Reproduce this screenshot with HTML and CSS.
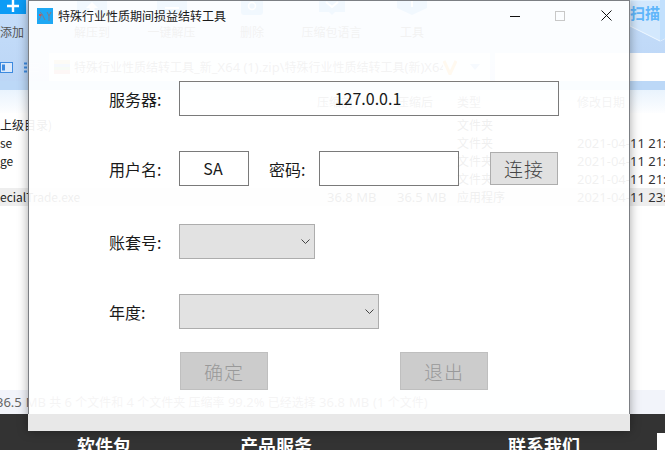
FILE: index.html
```html
<!DOCTYPE html>
<html lang="zh-CN">
<head>
<meta charset="utf-8">
<title>特殊行业性质期间损益结转工具</title>
<link rel="stylesheet" href="styles.css">
</head>
<body>
<div class="desktop">
  <div class="app">
    <div class="toolbar">
      <div class="tools">
        <div class="tool tool-add">
          <div class="add-btn">
            <svg width="12" height="12" viewBox="0 0 12 12"><path d="M6 0v12M0 6h12" stroke="#fff" stroke-width="2.4"/></svg>
          </div>
          <span>添加</span>
        </div>
        <div class="tool tool-a">
          <svg class="tool-icon" width="30" height="15" viewBox="0 0 30 15"><rect width="30" height="15" fill="#3d9bee"/><path d="M15 2l6 6h-3.500v7h-5V8H9z" fill="#fff"/></svg>
          <span>解压到</span>
        </div>
        <div class="tool tool-b">
          <svg class="tool-icon" width="30" height="15" viewBox="0 0 30 15"><path d="M0 0h30v11l-4 4H4l-4-4z" fill="#3d9bee"/><path d="M8 8h14" stroke="#fff" stroke-width="2"/></svg>
          <span>一键解压</span>
        </div>
        <div class="tool tool-c">
          <svg class="tool-icon" width="22" height="15" viewBox="0 0 22 15"><path d="M0 0h22v12q0 3-3 3H3q-3 0-3-3z" fill="#3d9bee"/><circle cx="11" cy="6" r="3.500" fill="none" stroke="#fff" stroke-width="1.500"/></svg>
          <span>删除</span>
        </div>
        <div class="tool tool-d">
          <svg class="tool-icon" width="26" height="15" viewBox="0 0 26 15"><path d="M0 0h26v12H16l-3 3-3-3H0z" fill="#3d9bee"/><path d="M7 2l6 5 6-5" fill="none" stroke="#fff" stroke-width="2"/></svg>
          <span>压缩包语言</span>
        </div>
        <div class="tool tool-e">
          <svg class="tool-icon" width="30" height="15" viewBox="0 0 30 15"><path d="M0 0h30v8l-15 7L0 8z" fill="#3d9bee"/><path d="M15 1v6" stroke="#fff" stroke-width="2"/></svg>
          <span>工具</span>
        </div>
        <div class="scan">
          <svg class="shield" width="60" height="42" viewBox="0 0 60 42"><path d="M0 0h60v26L30 41 0 26z" fill="#d3e8fd" stroke="#eef7ff"/><path d="M30 0h30v26L30 41z" fill="#c2e0fd"/></svg>
          <span class="scan-text">扫描</span>
        </div>
      </div>
      <div class="addressbar">
        <div class="view-icons">
          <svg width="13" height="11" viewBox="0 0 13 11"><rect x=".5" y=".5" width="12" height="10" fill="#dbe9fb" stroke="#3d8adf"/><rect x="2" y="2.500" width="3" height="6" fill="#3d8adf"/></svg>
          <svg width="15" height="11" viewBox="0 0 15 11"><path d="M0 1.500h3M0 5.500h3M0 9.500h3" stroke="#3d8adf" stroke-width="2"/><path d="M5 1.500h10M5 5.500h10M5 9.500h10" stroke="#d5e2f3"/></svg>
        </div>
        <div class="path">
          <svg class="zip" width="16" height="14" viewBox="0 0 16 14"><rect width="16" height="14" fill="#e3c97a"/><rect y="4" width="16" height="3" fill="#7aa7d8"/><rect y="7" width="16" height="3" fill="#8dbd7a"/><rect y="10" width="16" height="4" fill="#d98a7a"/></svg>
          <span class="path-text">特殊行业性质结转工具<span class="num">_</span>新<span class="num">_X64 (1).zip\</span>特殊行业性质结转工具<span class="num">(</span>新<span class="num">)X64</span></span>
          <svg class="vee" width="14" height="15" viewBox="0 0 14 15"><path d="M1 1l6 13 6-13" fill="none" stroke="#f5a623" stroke-width="3"/></svg>
          <svg class="caret" width="10" height="6" viewBox="0 0 10 6"><path d="M0 0h10L5 6z" fill="#7fb2e6"/></svg>
        </div>
        <div class="search"></div>
      </div>
    </div>
    <div class="band"></div>
    <div class="list-head">
      <span class="col-head-name"></span>
      <span class="col-head-size">压缩前</span>
      <span class="col-packed">压缩后</span>
      <span class="col-type">类型</span>
      <span class="col-date-head">修改日期</span>
    </div>
    <div class="list">
      <div class="item"><span class="col-name">上级目录)</span><span class="col-size"></span><span class="col-packed"></span><span class="col-type">文件夹</span><span class="col-date"></span></div>
      <div class="item"><span class="col-name">se</span><span class="col-size"></span><span class="col-packed"></span><span class="col-type">文件夹</span><span class="col-date">2021-04-11 21:40</span></div>
      <div class="item"><span class="col-name">ge</span><span class="col-size"></span><span class="col-packed"></span><span class="col-type">文件夹</span><span class="col-date">2021-04-11 21:40</span></div>
      <div class="item"><span class="col-name"></span><span class="col-size"></span><span class="col-packed"></span><span class="col-type">文件夹</span><span class="col-date">2021-04-11 21:40</span></div>
      <div class="item item-selected"><span class="col-name">ecialTrade.exe</span><span class="col-size num">36.8 MB</span><span class="col-packed num">36.5 MB</span><span class="col-type">应用程序</span><span class="col-date">2021-04-11 23:10</span></div>
    </div>
    <div class="status"><span class="num">36.5 MB</span> 共 <span class="num">6</span> 个文件和 <span class="num">4</span> 个文件夹 压缩率 <span class="num">99.2%</span> 已经选择 <span class="num">36.8 MB (1</span> 个文件<span class="num">)</span></div>
    <div class="footer">
      <span class="foot-a">软件包</span>
      <span class="foot-b">产品服务</span>
      <span class="foot-c">联系我们</span>
      <span class="foot-box"></span>
    </div>
  </div>

  <div class="dialog">
    <div class="titlebar">
      <svg class="app-icon" width="16" height="16" viewBox="0 0 16 16"><rect width="16" height="16" fill="#1ea8f4"/><path d="M2 12l3-6 3 6M5 6L3 4M10 4l2 4 2-4M12 8v5" fill="none" stroke="#7d7d8c"/><path d="M2 6h2v2H2z" fill="#d2504f"/></svg>
      <span class="app-title">特殊行业性质期间损益结转工具</span>
      <div class="win-controls">
        <svg class="win-min" width="10" height="10" viewBox="0 0 10 10"><path d="M0 5.500h10" stroke="#111"/></svg>
        <svg class="win-max" width="10" height="10" viewBox="0 0 10 10"><rect x=".5" y=".5" width="9" height="9" fill="none" stroke="#c8c8c8"/></svg>
        <svg class="win-close" width="11" height="11" viewBox="0 0 11 11"><path d="M.5.5l10 10M10.500.5l-10 10" stroke="#111"/></svg>
      </div>
    </div>
    <div class="form">
      <div class="row">
        <label class="label">服务器:</label>
        <input class="field field-server" type="text" value="127.0.0.1">
      </div>
      <div class="row row-user">
        <label class="label">用户名:</label>
        <input class="field field-user" type="text" value="SA">
        <label class="label label-pass">密码:</label>
        <input class="field field-pass" type="password">
        <button class="btn btn-connect" type="button">连接</button>
      </div>
      <div class="row row-book">
        <label class="label">账套号:</label>
        <div class="select select-book">
          <svg width="9" height="5" viewBox="0 0 9 5"><path d="M.5.5l4 4 4-4" fill="none" stroke="#444"/></svg>
        </div>
      </div>
      <div class="row row-year">
        <label class="label">年度:</label>
        <div class="select select-year">
          <svg width="9" height="5" viewBox="0 0 9 5"><path d="M.5.5l4 4 4-4" fill="none" stroke="#444"/></svg>
        </div>
      </div>
      <div class="row row-actions">
        <button class="btn btn-off" type="button" disabled>确定</button>
        <button class="btn btn-off btn-exit" type="button" disabled>退出</button>
      </div>
    </div>
    <div class="dialog-band"></div>
  </div>
</div>
</body>
</html>
```

FILE: styles.css
```css
* { box-sizing: border-box; }
html, body { margin: 0; padding: 0; }
body {
  width: 665px;
  height: 450px;
  overflow: hidden;
  font-family: "Noto Sans CJK SC", "Noto Sans", sans-serif;
  background: #fff;
}
.desktop { position: relative; width: 665px; height: 450px; overflow: hidden; }
.app { display: flex; flex-direction: column; height: 450px; color: #333; font-size: 12px; }
.num { font-family: "Noto Sans", "Noto Sans CJK SC", sans-serif; font-size: 13px; }

/* background application */
.toolbar { height: 81px; background: linear-gradient(#c6defa, #bcd6f6); flex: none; }
.tools { display: flex; height: 53px; overflow: hidden; }
.tool { display: flex; flex-direction: column; align-items: center; flex: none; }
.tool span { font-size: 12px; line-height: 18px; margin-top: 8px; color: #444; white-space: nowrap; }
.tool-add { width: 26px; margin-right: 48px; }
.tool-add span { margin-top: 9px; margin-left: -2px; color: #555; }
.add-btn { width: 26px; height: 14px; background: #0c9cf6; display: flex; justify-content: center; overflow: hidden; flex: none; }
.tool-icon { display: block; flex: none; }
.tool-a { width: 36px; margin-right: 37px; }
.tool-b { width: 49px; margin-right: 44px; }
.tool-c { width: 24px; margin-right: 38px; }
.tool-d { width: 59px; margin-right: 39px; }
.tool-e { width: 24px; }
.scan { margin-left: auto; width: 60px; height: 53px; position: relative; margin-right: -25px; flex: none; overflow: hidden; }
.shield { display: block; position: absolute; left: 0; top: 0; }
.scan-text { position: absolute; left: 0; top: 2px; font-size: 15px; line-height: 22px; font-weight: 700; color: #5fb6fb; white-space: nowrap; }

.addressbar { display: flex; height: 28px; align-items: stretch; }
.view-icons { width: 49px; display: flex; align-items: center; gap: 11px; flex: none; }
.path { width: 441px; display: flex; align-items: center; background: #eef5fd; padding-left: 5px; flex: none; overflow: hidden; }
.zip { flex: none; }
.path-text { width: 369px; flex: none; margin-left: 4px; font-size: 12px; white-space: nowrap; overflow: hidden; color: #555; }
.vee { flex: none; }
.caret { flex: none; margin-left: 13px; }
.search { flex: 1; margin-left: 5px; background: #fff; }

.band { height: 9px; background: #bcd8f7; flex: none; }
.list-head { height: 23px; display: flex; align-items: center; background: linear-gradient(#e9f3fd, #fdfeff); color: #555; flex: none; }
.col-head-name { width: 317px; flex: none; }
.col-head-size { width: 80px; flex: none; white-space: nowrap; }
.col-date-head { flex: none; white-space: nowrap; }
.list { flex: 1; padding-top: 3px; color: #222; }
.item { height: 18px; line-height: 18px; display: flex; overflow: hidden; }
.item-selected { background: #eeeeee; }
.col-name { width: 327px; flex: none; white-space: nowrap; }
.col-size { width: 70px; flex: none; white-space: nowrap; }
.col-packed { width: 60px; flex: none; white-space: nowrap; }
.col-type { width: 120px; flex: none; white-space: nowrap; }
.col-date { flex: none; white-space: nowrap; color: #333; font-family: "Noto Sans", sans-serif; font-size: 13px; }
.status { height: 24px; flex: none; background: #f2f4fa; line-height: 24px; white-space: nowrap; text-indent: -4px; word-spacing: 0.6px; color: #666; }
.footer { height: 36px; background: #333; display: flex; overflow: hidden; color: #fff; font-size: 18px; font-weight: 700; line-height: 24px; padding-top: 19px; padding-left: 77px; flex: none; }
.foot-a { width: 163px; flex: none; }
.foot-b { width: 268px; flex: none; }
.foot-c { width: 149px; flex: none; }
.foot-box { width: 20px; height: 22px; background: #fff; flex: none; }

/* dialog window over the application */
.dialog {
  position: absolute;
  left: 28px;
  top: 0;
  width: 602px;
  height: 431px;
  display: flex;
  flex-direction: column;
  background: rgba(255, 255, 255, 0.93);
  border: 1px solid #7c7f84;
  border-bottom: 0;
  box-shadow: 0 0 10px rgba(0, 0, 0, 0.35);
  color: #1a1a1a;
}
.titlebar { height: 29px; display: flex; align-items: center; padding-left: 8px; flex: none; }
.app-icon { flex: none; }
.app-title { font-size: 12px; line-height: 16px; margin-left: 5px; color: #1a1a1a; white-space: nowrap; }
.win-controls { margin-left: auto; display: flex; align-items: center; padding-right: 17px; }
.win-min { margin-right: 35px; }
.win-max { margin-right: 36px; }
.form { flex: 1; padding: 51px 0 0 80px; }
.row { display: flex; align-items: center; height: 35px; }
.row-user { margin-top: 35px; }
.row-book { margin-top: 38px; }
.row-year { margin-top: 35px; }
.row-actions { margin-top: 23px; height: 38px; padding-left: 71px; }
.label { width: 70px; flex: none; font-size: 16px; line-height: 20px; white-space: nowrap; }
.label-pass { width: 50px; margin-left: 20px; }
.field {
  height: 35px;
  border: 1px solid #7a7a7a;
  border-radius: 0;
  background: transparent;
  padding: 0 2px 2px 0;
  margin: 0;
  font-family: "Noto Sans CJK SC", "Noto Sans", sans-serif;
  font-size: 16px;
  color: #1a1a1a;
  text-align: center;
  outline: 0;
  flex: none;
}
.field-server { width: 380px; }
.field-user { width: 70px; }
.field-pass { width: 140px; }
.select {
  height: 35px;
  background: #e2e2e2;
  border: 1px solid #adadad;
  display: flex;
  align-items: center;
  justify-content: flex-end;
  padding-right: 4px;
  flex: none;
}
.select-book { width: 136px; }
.select-year { width: 200px; }
.btn {
  margin: 0;
  padding: 0;
  border-radius: 0;
  font-family: "Noto Sans CJK SC", "Noto Sans", sans-serif;
  font-size: 19px;
  font-weight: 300;
  letter-spacing: 1px;
  flex: none;
}
.btn-connect { width: 68px; height: 33px; margin-left: 31px; background: #e1e1e1; border: 1px solid #adadad; color: #444; }
.btn-off { width: 88px; height: 38px; background: #cccccc; border: 1px solid #bfbfbf; color: #999; }
.btn-exit { margin-left: 132px; }
.dialog-band { height: 17px; background: #e8e8e8; flex: none; margin: 0 -1px; }
```
